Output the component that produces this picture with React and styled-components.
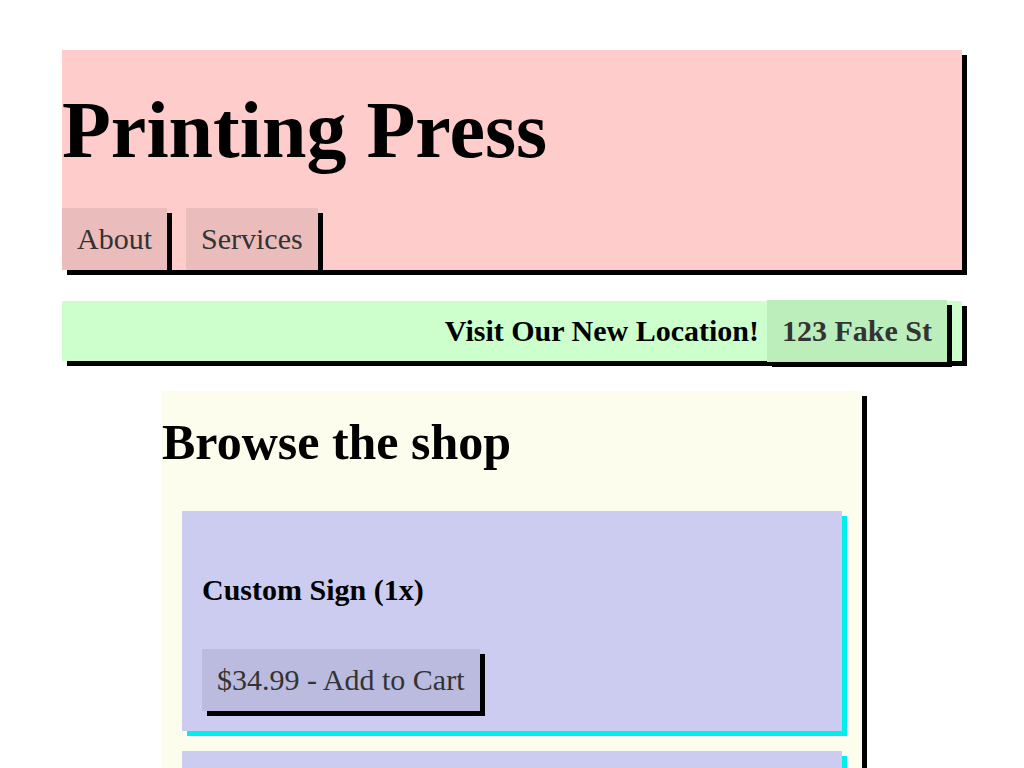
import React from "react";
import styled, { createGlobalStyle } from "styled-components";

const Global = createGlobalStyle`
  html, body { margin: 0; padding: 0; background: #fff; }
  body { font-family: "Liberation Serif", "Times New Roman", serif; color: #000; }
`;

const Page = styled.div`
  padding-top: 50px;
  display: flex;
  flex-direction: column;
  align-items: center;
`;

const Header = styled.header`
  width: 900px;
  background: #ffcccc;
  box-shadow: 5px 5px 0 #000;
  display: flex;
  flex-direction: column;
`;

const Title = styled.h1`
  margin: 35px 0 32px;
  font-size: 80px;
  font-weight: bold;
  line-height: normal;
`;

const Nav = styled.nav`
  display: flex;
  gap: 19px;
`;

const Button = styled.button`
  font-family: "Liberation Serif", "Times New Roman", serif;
  font-size: 30px;
  font-weight: ${(p) => (p.$bold ? "bold" : "normal")};
  line-height: 34px;
  height: 62px;
  padding: 0 15px;
  border: none;
  border-radius: 0;
  color: #333;
  background: ${(p) => p.$bg};
  box-shadow: 5px 5px 0 #000;
  cursor: pointer;
  flex: none;
`;

const Banner = styled.div`
  width: 900px;
  height: 60px;
  margin-top: 31px;
  background: #ccffcc;
  box-shadow: 5px 5px 0 #000;
  display: flex;
  align-items: center;
  justify-content: flex-end;
  gap: 8px;
  padding-right: 15px;
  box-sizing: border-box;
`;

const BannerText = styled.strong`
  font-size: 30px;
  font-weight: bold;
`;

const Shop = styled.section`
  width: 700px;
  margin-top: 30px;
  background: #fdfdee;
  box-shadow: 5px 5px 0 #000;
  padding-bottom: 20px;
`;

const ShopTitle = styled.h2`
  margin: 22px 0 40px;
  font-size: 50px;
  font-weight: bold;
  line-height: normal;
`;

const Cards = styled.div`
  display: flex;
  flex-direction: column;
  gap: 20px;
  padding: 0 20px;
`;

const Card = styled.article`
  background: #ccccf0;
  box-shadow: 5px 5px 0 #00eeee;
  padding: 20px;
  display: flex;
  flex-direction: column;
  align-items: flex-start;
`;

const CardTitle = styled.h3`
  margin: 42px 0;
  font-size: 30px;
  font-weight: bold;
  line-height: normal;
`;

const products = [
  { name: "Custom Sign (1x)", price: "$34.99" },
  { name: "Business Cards (100x)", price: "$19.99" },
  { name: "Poster Print (1x)", price: "$24.99" },
];

export default function App() {
  return (
    <>
      <Global />
      <Page>
        <Header>
          <Title>Printing Press</Title>
          <Nav>
            <Button $bg="#ebbcbc">About</Button>
            <Button $bg="#ebbcbc">Services</Button>
          </Nav>
        </Header>
        <Banner>
          <BannerText>Visit Our New Location!</BannerText>
          <Button $bg="#bbeebb" $bold>123 Fake St</Button>
        </Banner>
        <Shop>
          <ShopTitle>Browse the shop</ShopTitle>
          <Cards>
            {products.map((p) => (
              <Card key={p.name}>
                <CardTitle>{p.name}</CardTitle>
                <Button $bg="#bbbbe0">{p.price} - Add to Cart</Button>
              </Card>
            ))}
          </Cards>
        </Shop>
      </Page>
    </>
  );
}
